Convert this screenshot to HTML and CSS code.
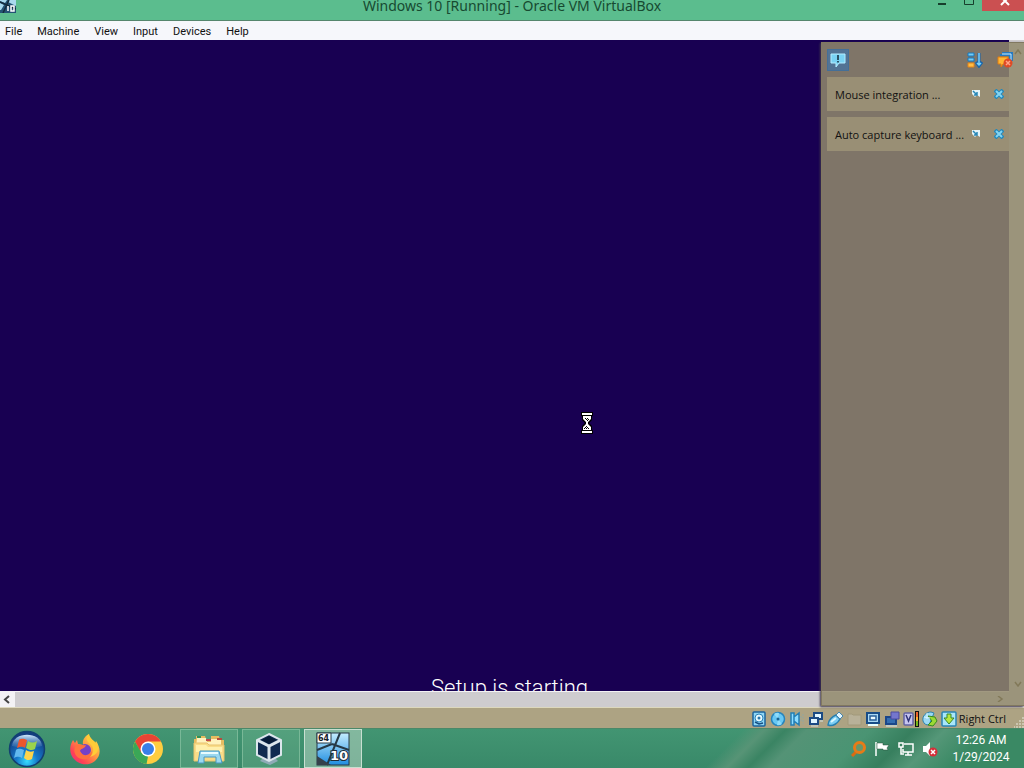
FILE: index.html
```html
<!DOCTYPE html>
<html lang="en">
<head>
    <meta charset="UTF-8">
    <meta name="viewport" content="width=device-width, initial-scale=1.0">
    <title>Windows 10 [Running] - Oracle VM VirtualBox</title>
    <link rel="stylesheet" href="styles.css">
</head>

<body>
    <header class="title-bar">
        <svg class="title-icon" viewBox="0 0 16 13">
            <rect width="16" height="13" fill="#245374"/>
            <path d="M0 0H7L5 3 0 1zM9 0H16V6L8 2zM0 3L4 5 1 10H0z" fill="#a9d9ed"/>
            <path d="M0 2L16 9M9 0L3 13" stroke="#152b3c" stroke-width="1.500"/>
            <path d="M8 6v5M11 6h3v5h-3z" fill="none" stroke="#fff" stroke-width="1.500"/>
        </svg>
        <h1 class="title-text">Windows 10 [Running] - Oracle VM VirtualBox</h1>
        <div class="window-buttons">
            <button type="button" class="window-button" aria-label="Minimize">
                <svg viewBox="0 0 27 11"><path d="M10 4h8" stroke="#173e2c" stroke-width="2"/></svg>
            </button>
            <button type="button" class="window-button" aria-label="Maximize">
                <svg viewBox="0 0 27 11"><path d="M9.500 -3v7.500h9v-7.500" fill="none" stroke="#173e2c"/></svg>
            </button>
            <button type="button" class="window-button close" aria-label="Close">
                <svg viewBox="0 0 42 11"><path d="M19 -3l8 8M27 -3l-8 8" stroke="#fff" stroke-width="2"/></svg>
            </button>
        </div>
    </header>

    <nav class="menu-bar">
        <button type="button">File</button>
        <button type="button">Machine</button>
        <button type="button">View</button>
        <button type="button">Input</button>
        <button type="button">Devices</button>
        <button type="button">Help</button>
    </nav>

    <main class="viewer">
        <div class="guest-screen">
            <svg class="hourglass" viewBox="0 0 12 22">
                <path d="M0 0h12v4h-1v4L8 11l3 3v4h1v4H0v-4h1v-4l3-3-3-3V4H0z" fill="#000"/>
                <path d="M1 1h10v2H1zM1 19h10v2H1zM2 4h8v3L7 10v2l3 3v3H2v-3l3-3v-2L2 7z" fill="#fff"/>
                <path d="M4 6h1v1H4zM6 6h1v1H6zM5 7h1v1H5zM7 7h1v1H7zM6 8h1v1H6zM5 14h1v1H5zM4 15h1v1H4zM6 15h1v1H6zM3 16h1v1H3zM5 16h1v1H5zM7 16h1v1H7z" fill="#000"/>
            </svg>
            <p class="setup-text">Setup is starting</p>
        </div>
        <div class="scroll-vertical"></div>
        <div class="scroll-horizontal">
            <button type="button" class="scroll-arrow" aria-label="Scroll left">
                <svg viewBox="0 0 15 16"><path d="M9 4L5 7.500 9 11" fill="none" stroke="#444" stroke-width="2"/></svg>
            </button>
            <div class="scroll-thumb"></div>
        </div>
        <div class="scroll-corner"></div>

        <aside class="notice-panel">
            <div class="notice-tools">
                <button type="button" class="notice-toggle" aria-label="Messages">
                    <svg class="icon" viewBox="0 0 16 16">
                        <path d="M1 2h14v9H9l-3 4v-4H1z" fill="#79d2f3" stroke="#b4edff"/>
                        <path d="M8 3v5M8 9v1.500" stroke="#102838" stroke-width="1.500"/>
                    </svg>
                </button>
                <button type="button" class="tool" aria-label="Sort messages">
                    <svg class="icon" viewBox="0 0 16 16">
                        <path d="M1 1h6v3H1zM1 6h6v3H1z" fill="#75ccf5" stroke="#1678bd"/>
                        <path d="M1 11h6v4H1z" fill="#ffbd45" stroke="#e48419"/>
                        <path d="M12 1v12M9 10l3 4 3-4" fill="none" stroke="#1766ad" stroke-width="3"/>
                        <path d="M12 1v12M10 11l2 2 2-2" fill="none" stroke="#7bd0fa" stroke-width="1.500"/>
                    </svg>
                </button>
                <button type="button" class="tool" aria-label="Delete all messages">
                    <svg class="icon" viewBox="0 0 16 16">
                        <path d="M5 1h10v8M3 3h10v5" fill="none" stroke="#277ac1" stroke-width="2"/>
                        <path d="M5 2h9v6" fill="none" stroke="#c7ecff"/>
                        <path d="M1 5h10v7H6l-2 3v-3H1z" fill="#ffb633" stroke="#df7d15"/>
                        <circle cx="11" cy="11" r="4.500" fill="#df4a25"/>
                        <path d="M9 9l4 4M13 9l-4 4" stroke="#ffa386" stroke-width="1.500"/>
                    </svg>
                </button>
            </div>
            <div class="notice">
                <span class="notice-text">Mouse integration ...</span>
                <button type="button" class="mini" aria-label="Detach mouse message"><svg viewBox="0 0 10 10"><path d="M1 1h8v7L6 6 4 8 1 5z" fill="#e5f5fa"/><path d="M2 2l4 4M6 3v3H3" fill="none" stroke="#2787b7" stroke-width="1.500"/></svg></button>
                <button type="button" class="mini" aria-label="Close mouse message"><svg viewBox="0 0 10 10"><path d="M1 1l8 8M9 1L1 9" stroke="#2188bd" stroke-width="4"/><path d="M2 2l6 6M8 2L2 8" stroke="#83d5f4" stroke-width="2"/></svg></button>
            </div>
            <div class="notice">
                <span class="notice-text">Auto capture keyboard ...</span>
                <button type="button" class="mini" aria-label="Detach keyboard message"><svg viewBox="0 0 10 10"><path d="M1 1h8v7L6 6 4 8 1 5z" fill="#e5f5fa"/><path d="M2 2l4 4M6 3v3H3" fill="none" stroke="#2787b7" stroke-width="1.500"/></svg></button>
                <button type="button" class="mini" aria-label="Close keyboard message"><svg viewBox="0 0 10 10"><path d="M1 1l8 8M9 1L1 9" stroke="#2188bd" stroke-width="4"/><path d="M2 2l6 6M8 2L2 8" stroke="#83d5f4" stroke-width="2"/></svg></button>
            </div>
            <svg class="faint-arrow arrow-up" viewBox="0 0 8 6"><path d="M1 5l3-4 3 4" fill="none" stroke="#827959" stroke-width="1.500"/></svg>
            <svg class="faint-arrow arrow-down" viewBox="0 0 8 6"><path d="M1 1l3 4 3-4" fill="none" stroke="#827959" stroke-width="1.500"/></svg>
            <svg class="faint-arrow arrow-right" viewBox="0 0 8 6"><path d="M2 0l4 3-4 3" fill="none" stroke="#827959" stroke-width="1.500"/></svg>
        </aside>
    </main>

    <footer class="status-bar">
        <div class="status-icons">
            <!-- hard disk -->
            <svg class="icon" viewBox="0 0 16 16"><rect x="2" y="1" width="12" height="14" rx="1" fill="#8ed6f5" stroke="#1d649d" stroke-width="1.500"/><circle cx="8" cy="7" r="4" fill="#e5faff" stroke="#2a82b9"/><circle cx="8" cy="7" r="1.500" fill="#2876ac"/><path d="M4 11l4 2 4-1" fill="none" stroke="#174f82" stroke-width="1.500"/></svg>
            <!-- optical disc -->
            <svg class="icon" viewBox="0 0 16 16"><circle cx="8" cy="8" r="6.500" fill="#68c8f4" stroke="#2684bd" stroke-width="1.500"/><path d="M8 8L4 3a6 6 0 0 1 5-1zM8 8l4 5a6 6 0 0 1-5 1z" fill="#8fdcfa"/><circle cx="8" cy="8" r="1.500" fill="#176596"/></svg>
            <!-- audio -->
            <svg class="icon" viewBox="0 0 16 16"><path d="M2 2h3v12H2zM5 6l5-4v12l-5-4z" fill="#8edcff" stroke="#237fb7" stroke-width="1.500"/><path d="M12 5v6M14 3v10" stroke="#91a69f" stroke-dasharray="2 1"/></svg>
            <!-- network -->
            <svg class="icon" viewBox="0 0 16 16"><path d="M6 2h8v6H6z" fill="#e1f6ff" stroke="#1b4a83" stroke-width="2"/><path d="M2 7h8v6H2z" fill="#e1f6ff" stroke="#1b4a83" stroke-width="2"/><path d="M3 15h7M12 10h3" stroke="#d3e2e3"/></svg>
            <!-- usb -->
            <svg class="icon" viewBox="0 0 16 16"><path d="M1 14c0-5 5-9 8-10l4 4c-2 4-7 8-12 6z" fill="#7bcdf3" stroke="#267eaf" stroke-width="1.500"/><path d="M9 4l3-3 4 4-3 3z" fill="#e4f7ff" stroke="#4785ac"/><path d="M4 11l5-4" stroke="#d9f7ff" stroke-width="2"/></svg>
            <!-- shared folders, unused -->
            <svg class="icon" viewBox="0 0 16 16"><path d="M2 3h4l1 1h8v10H2z" fill="#b8b199" stroke="#a1997b"/></svg>
            <!-- display -->
            <svg class="icon" viewBox="0 0 16 16"><path d="M2 2h12v10H2z" fill="#a9d8f2" stroke="#174c87" stroke-width="2"/><path d="M5 5h6v4H5z" fill="#e9faff" stroke="#275f9a" stroke-width="1.500"/><path d="M3 14h10" stroke="#e7ffff" stroke-width="2"/></svg>
            <!-- recording -->
            <svg class="icon" viewBox="0 0 16 16"><path d="M2 6h10v7H2z" fill="#346eb2" stroke="#1b4789" stroke-width="2"/><path d="M7 1h8v7H7z" fill="#7476cd" stroke="#4c4b9d"/><path d="M2 15h11" stroke="#d4edf5"/></svg>
            <!-- processor -->
            <svg class="icon" viewBox="0 0 16 16"><rect x="1" y="2" width="9" height="12" rx="1" fill="#c7c5ef" stroke="#6263a5" stroke-width="1.500"/><path d="M3 4l2.500 6L8 4" fill="none" stroke="#303479" stroke-width="1.500"/><path d="M12 0h4v16h-4z" fill="#111"/><path d="M13 1h2v5h-2z" fill="#ec622b"/><path d="M13 6h2v4h-2z" fill="#ffb12e"/><path d="M13 10h2v5h-2z" fill="#76b51b"/></svg>
            <!-- mouse -->
            <svg class="icon" viewBox="0 0 16 16"><path d="M1 10C0 5 4 1 9 1l3 1-5 12C4 14 2 13 1 10z" fill="#9bd9f4" stroke="#2c83af"/><path d="M6 5l7 1 2 4-4 5-5-1 4-4z" fill="#9bda35" stroke="#388a22"/><path d="M5 2v6M2 6l6 1" stroke="#d8f5ff"/></svg>
            <!-- keyboard -->
            <svg class="icon" viewBox="0 0 16 16"><rect x="1" y="1" width="14" height="14" rx="1" fill="#a9e6fa" stroke="#2a84b5" stroke-width="1.500"/><path d="M6 3h4v4h3l-5 6-5-6h3z" fill="#b8e73e" stroke="#37882e"/></svg>
        </div>
        <span class="host-key">Right Ctrl</span>
        <svg class="grip" viewBox="0 0 10 12"><path d="M8 2h2M5 5h2M8 5h2M2 8h2M5 8h2M8 8h2M0 11h1M2 11h2M5 11h2M8 11h2" stroke="#cbc5b0" stroke-width="2"/></svg>
    </footer>

    <div class="taskbar">
        <button type="button" class="start-button" aria-label="Start">
            <svg viewBox="0 0 38 38">
                <defs>
                    <radialGradient id="orb" cx="50%" cy="85%" r="75%">
                        <stop offset="0" stop-color="#37dcff"/><stop offset="0.400" stop-color="#1679ca"/><stop offset="1" stop-color="#123c80"/>
                    </radialGradient>
                    <linearGradient id="shine" x2="0" y2="1"><stop offset="0" stop-color="#d2eaff"/><stop offset="1" stop-color="#689bcc" stop-opacity=".1"/></linearGradient>
                </defs>
                <circle cx="19" cy="19" r="17.500" fill="url(#orb)" stroke="#124072" stroke-width="1.500"/>
                <path d="M4 16C5 1 33 1 34 16 27 18 19 20 4 16z" fill="url(#shine)"/>
                <path d="M11 10c3-2 5-1 8 0l-2 8c-3-2-5-1-8 0z" fill="#ed572c"/>
                <path d="M20 11c3 2 6 2 9 0l-2 8c-3 2-6 1-9-1z" fill="#9bd34c"/>
                <path d="M8 20c3-2 5-1 8 0l-2 8c-3-2-6-1-8 0z" fill="#62b9ef"/>
                <path d="M18 20c3 2 5 2 8 1l-2 8c-3 2-6 1-8-1z" fill="#ffd44a"/>
            </svg>
        </button>
        <button type="button" class="task" aria-label="Firefox">
            <svg viewBox="0 0 34 34">
                <defs><linearGradient id="fox" x1="1" x2="0" y2="1"><stop offset="0" stop-color="#fff24a"/><stop offset=".45" stop-color="#ff9640"/><stop offset=".75" stop-color="#ff4056"/><stop offset="1" stop-color="#e32b87"/></linearGradient></defs>
                <path d="M5 8L7 11 9 8 10 12 15 13C14 8 17 4 21 2c0 5 4 6 6 10l1-3c5 7 5 15-1 20-6 5-15 4-20-1C1 23 1 14 5 8z" fill="url(#fox)"/>
                <circle cx="17" cy="18" r="6" fill="#7541c8"/>
                <path d="M8 13c4-2 6 1 10 0-1 4-5 3-6 6 3 6 9 5 12 0 0 7-5 9-10 8-6-1-10-7-6-14z" fill="#ff713e"/>
                <path d="M21 2c-5 5-1 8 2 11 4 4 2 9-1 12 7-2 10-7 7-13-3-4-7-5-8-10z" fill="#ffcc38"/>
            </svg>
        </button>
        <button type="button" class="task" aria-label="Chrome">
            <svg viewBox="0 0 34 34">
                <circle cx="18" cy="17" r="15" fill="#ffcd40"/>
                <path d="M5 9.500A15 15 0 0 1 31 9.500H18L11 21z" fill="#e94435"/>
                <path d="M5 9.500L11.500 21 18 24.500 16.500 32A15 15 0 0 1 5 9.500z" fill="#3aa757"/>
                <circle cx="18" cy="17" r="7.500" fill="#fff"/>
                <circle cx="18" cy="17" r="6" fill="#397fe8"/>
            </svg>
        </button>
        <button type="button" class="task open" aria-label="File Explorer">
            <svg viewBox="0 0 34 34">
                <path d="M2 7h2V4h9l1 3h5V4h8l1 4h4v21H2z" fill="#e7bc61"/>
                <path d="M5 6h9l1 4h4V7h10v8H4z" fill="#fff2bd"/>
                <path d="M5 5h4" stroke="#329255" stroke-width="2"/>
                <path d="M14 8h5" stroke="#bd4c4c" stroke-width="2"/>
                <path d="M25 7h5" stroke="#b94b3d" stroke-width="2"/>
                <path d="M2 11h13l2 2h15v16H2z" fill="#f9dc88" stroke="#e7c36e"/>
                <path d="M4 13h10l2 2h14v5H4z" fill="#fff0ac"/>
                <path d="M6 31l2-12h19l3 12h-6v-6H12v6z" fill="#9bd8ef" stroke="#4998c2"/>
                <path d="M9 21h17" stroke="#e8fcff" stroke-width="2"/>
            </svg>
        </button>
        <button type="button" class="task open" aria-label="VirtualBox">
            <svg viewBox="0 0 34 34">
                <path d="M9 26h12l3 3-8 4-10-4z" fill="#8eaab6"/>
                <path d="M15 2l12 6v15l-12 6-12-6V8z" fill="#102b50" stroke="#dce6ec" stroke-width="2"/>
                <path d="M3 8l12 6 12-6M15 14v15" fill="none" stroke="#dce6ec" stroke-width="3"/>
                <path d="M8 8l7-4 7 4-7 4z" fill="#071c38"/>
            </svg>
        </button>
        <button type="button" class="task open active" aria-label="Windows 10 virtual machine">
            <svg viewBox="0 0 34 34">
                <defs><linearGradient id="pane" x2="0" y2="1"><stop offset="0" stop-color="#c4edff"/><stop offset="1" stop-color="#1f8de0"/></linearGradient></defs>
                <rect x="1" y="1" width="32" height="32" fill="url(#pane)" stroke="#273947"/>
                <path d="M24 1L11 33M1 18L16 12M16 12L33 18" stroke="#263946" stroke-width="2"/>
                <path d="M1 24l14 9H1z" fill="#35414b"/>
                <path d="M1 1h14v10H1z" fill="#fff" stroke="#293a46"/>
                <text x="2" y="9" class="badge-bits">64</text>
                <text x="14" y="28" class="badge-version">10</text>
            </svg>
        </button>

        <div class="tray">
            <button type="button" aria-label="Search">
                <svg class="icon" viewBox="0 0 16 16"><path d="M7 10l-5 5" stroke="#d96b12" stroke-width="3"/><circle cx="9.500" cy="6.500" r="5" fill="#68966a" stroke="#e77b17" stroke-width="3"/></svg>
            </button>
            <button type="button" aria-label="Action Center">
                <svg class="icon" viewBox="0 0 16 16"><path d="M2 1v14" stroke="#fff" stroke-width="1.500"/><path d="M3 2h6v2h6l-2 3 1 2H9V8H3z" fill="#fff" stroke="#244e3b" stroke-width=".5"/></svg>
            </button>
            <button type="button" aria-label="Network">
                <svg class="icon" viewBox="0 0 16 16"><path d="M6 3h9v8H5V8M10 11v3M7 14h7" fill="none" stroke="#fff" stroke-width="1.500"/><path d="M1 2h4v4H1zM3 6v7h3" fill="none" stroke="#fff" stroke-width="1.500"/></svg>
            </button>
            <button type="button" aria-label="Volume muted">
                <svg class="icon" viewBox="0 0 16 16"><path d="M1 5h3l4-4v14l-4-4H1z" fill="#fff"/><circle cx="11" cy="11" r="4.500" fill="#d52f39"/><path d="M9 9l4 4M13 9l-4 4" stroke="#fff" stroke-width="1.500"/></svg>
            </button>
        </div>
        <time class="clock" datetime="2024-01-29T00:26"><span>12:26 AM</span><span>1/29/2024</span></time>
    </div>
</body>
</html>
```

FILE: styles.css
```css
* {
    box-sizing: border-box;
}

body {
    margin: 0;
    height: 100vh;
    display: flex;
    flex-direction: column;
    overflow: hidden;
    font-family: Roboto, sans-serif;
    font-size: 11px;
    color: #111;
}

button {
    margin: 0;
    padding: 0;
    border: none;
    background: none;
    font: inherit;
    color: inherit;
}

svg {
    display: block;
}

.icon {
    width: 16px;
    height: 16px;
}

/* title and menu */
.title-bar {
    height: 21px;
    display: grid;
    grid-template-columns: 1fr auto 1fr;
    align-items: start;
    background-color: #5bbd8e;
    border-bottom: 1px solid #55866d;
    overflow: hidden;
}

.title-icon {
    width: 16px;
    height: 13px;
}

.title-text {
    margin: 0;
    font-family: "Noto Sans", sans-serif;
    font-size: 14px;
    line-height: 12px;
    font-weight: normal;
    color: #174a31;
}

.window-buttons {
    display: flex;
    justify-content: flex-end;
}

.window-button {
    width: 27px;
    height: 11px;
}

.window-button.close {
    width: 42px;
    background-color: #cb5051;
}

.menu-bar {
    height: 19px;
    padding: 1px 0 0 5px;
    display: flex;
    gap: 15px;
    background-color: #f6f7fb;
}

/* guest display */
.viewer {
    flex: 1;
    min-height: 0;
    position: relative;
    display: grid;
    grid-template-columns: 1fr 15px;
    grid-template-rows: 1fr 16px;
}

.guest-screen {
    position: relative;
    min-height: 0;
    display: flex;
    align-items: flex-end;
    justify-content: center;
    overflow: hidden;
    background-color: #180052;
}

.setup-text {
    margin: 0 0 -14px;
    padding-left: 10px;
    font-family: Roboto, sans-serif;
    font-size: 22px;
    font-weight: 300;
    line-height: 34px;
    color: #fff;
}

.hourglass {
    position: absolute;
    left: 581px;
    top: 372px;
    width: 12px;
    height: 22px;
}

.scroll-vertical,
.scroll-corner {
    background-color: #cfcccf;
}

.scroll-horizontal {
    display: flex;
    border-top: 1px solid #f4f2f5;
    background-color: #cecccf;
}

.scroll-arrow {
    width: 15px;
    background-color: #f3f2f5;
}

.scroll-thumb {
    flex: 1;
}

/* message center laid over the display */
.notice-panel {
    position: absolute;
    top: 2px;
    right: 0;
    bottom: 1px;
    width: 203px;
    padding: 6px 0 0 5px;
    background-color: rgba(146, 137, 108, 0.85);
    border: 1px solid #817860;
    border-width: 1px 0 1px 1px;
    box-shadow: -1px 1px 2px #3e364d;
}

.notice-tools {
    display: flex;
    align-items: center;
    gap: 14px;
    margin-bottom: 6px;
    padding-right: 11px;
}

.notice-toggle {
    width: 22px;
    height: 22px;
    margin-right: auto;
    padding: 2px;
    border: 1px solid #446f98;
    background-color: #527394;
}

.notice {
    height: 34px;
    margin: 0 15px 6px 0;
    padding: 0 5px 0 8px;
    display: flex;
    align-items: center;
    gap: 13px;
    background-color: #998f75;
}

.notice-text {
    flex: 1;
    min-width: 0;
    font-family: "Open Sans", sans-serif;
    white-space: nowrap;
}

.mini {
    flex: none;
    width: 10px;
    height: 10px;
}

.faint-arrow {
    position: absolute;
    width: 8px;
    height: 6px;
}

.arrow-up {
    right: 2px;
    top: 6px;
}

.arrow-down {
    right: 2px;
    bottom: 18px;
}

.arrow-right {
    right: 20px;
    bottom: 3px;
}

.status-bar {
    height: 21px;
    padding-top: 1px;
    display: flex;
    align-items: center;
    justify-content: flex-end;
    background-color: #ada383;
    border-top: 1px solid #ddd8bd;
}

.status-icons {
    display: flex;
    gap: 3px;
}

.host-key {
    margin: 0 8px 0 2px;
    font-family: "Open Sans", sans-serif;
}

.grip {
    width: 10px;
    height: 12px;
    align-self: flex-end;
}

/* taskbar */
.taskbar {
    height: 40px;
    display: flex;
    background: linear-gradient(135deg, transparent 70%, #579476 72%, #3a8463 74%, #549376 76%, #4a9473 82%, #377f5e 86%, #559778 89%, #3a8964 93%), linear-gradient(#429572, #398969);
    border-top: 1px solid #4b8869;
}

.start-button {
    width: 56px;
    padding-left: 8px;
}

.start-button svg {
    width: 38px;
    height: 38px;
}

.task {
    width: 58px;
    margin-right: 4px;
    display: flex;
    align-items: center;
    justify-content: center;
    border: 1px solid transparent;
}

.task svg {
    width: 34px;
    height: 34px;
}

.task.open {
    background-color: rgba(125, 190, 152, 0.3);
    border-color: #79b897;
}

.task.active {
    background-color: rgba(195, 220, 204, 0.5);
    border-color: #c8dfd1;
}

.badge-bits {
    font-family: "DejaVu Sans", sans-serif;
    font-size: 8px;
    font-weight: bold;
    fill: #17212a;
}

.badge-version {
    font-family: "DejaVu Sans", sans-serif;
    font-size: 13px;
    font-weight: bold;
    fill: #fff;
    stroke: #202d37;
    stroke-width: 2px;
    paint-order: stroke;
}

.tray {
    margin-left: auto;
    display: flex;
    align-items: center;
    gap: 8px;
}

.clock {
    width: 86px;
    display: flex;
    flex-direction: column;
    justify-content: center;
    align-items: center;
    font-size: 12px;
    line-height: 17px;
    color: #fff;
}
```
